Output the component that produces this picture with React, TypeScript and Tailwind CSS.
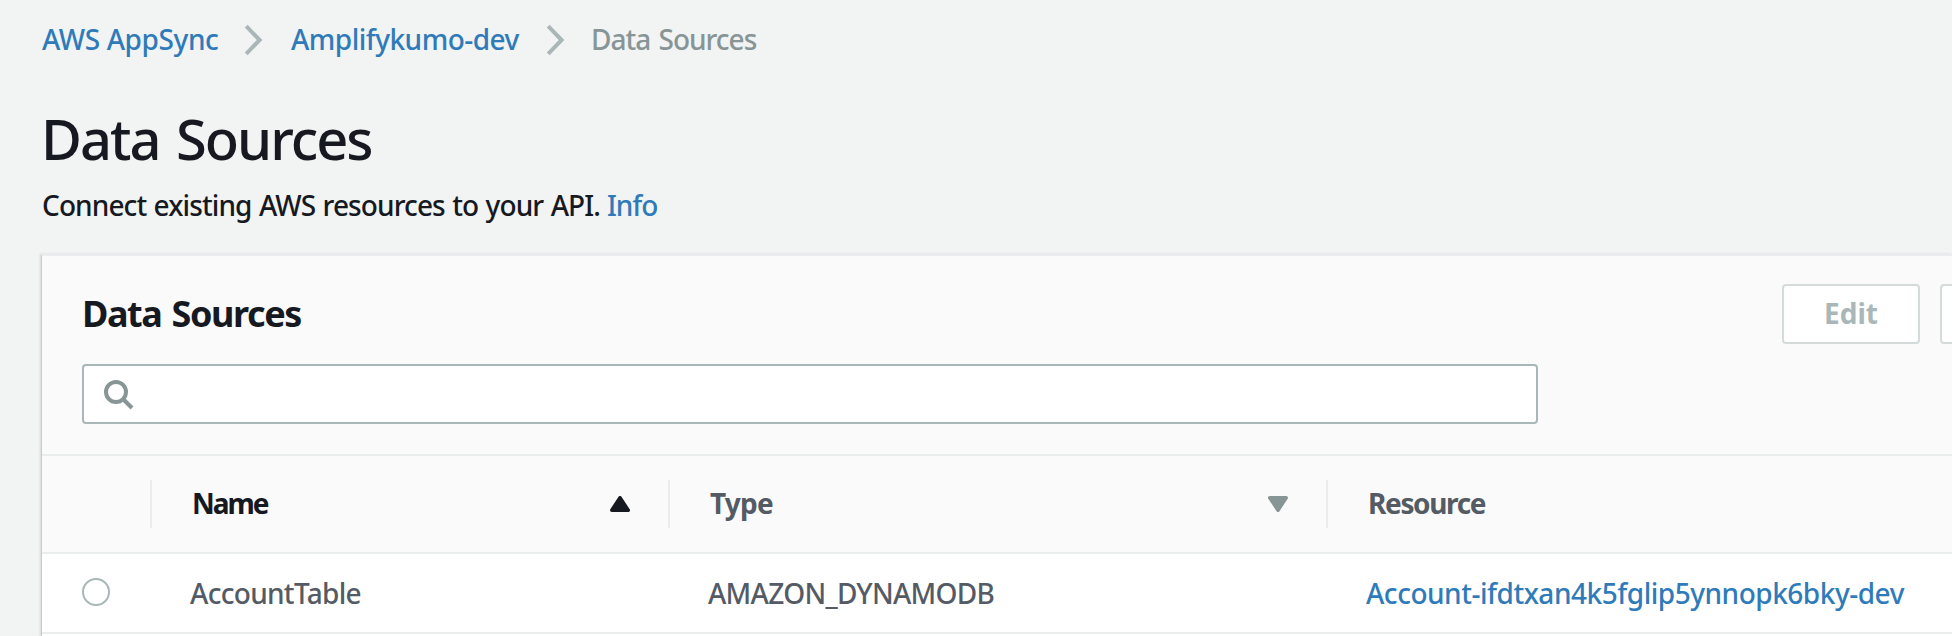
const Chevron = () => (
  <svg width="20" height="32" viewBox="0 0 20 32" fill="none" stroke="#aab7b8" strokeWidth="4" className="mt-[2px] shrink-0">
    <path d="M2.2 2.2 15.6 16 2.2 29.8" />
  </svg>
);

const SortIcon = ({ up = false }: { up?: boolean }) => (
  <svg width="20" height="16" viewBox="0 0 20 16" className={up ? "text-[#16191f]" : "rotate-180 text-[#879596]"}>
    <path d="M10 1.8 18.2 14.2H1.8Z" fill="currentColor" stroke="currentColor" strokeWidth="3.6" strokeLinejoin="round" />
  </svg>
);

const Divider = () => <span className="h-12 w-[2px] shrink-0 bg-[#eaeded]" />;

export default function App() {
  return (
    <div className="flex h-[636px] w-[1952px] flex-col overflow-hidden bg-[#f2f3f3] pl-[41px] font-['Noto_Sans',sans-serif] text-[28px] font-medium text-[#16191f]">
      <nav className="mt-[19px] flex h-10 items-center pl-px leading-10 whitespace-nowrap">
        <a className="w-[202px] shrink-0 tracking-[-0.4px] text-[#2f7bba]">AWS AppSync</a>
        <Chevron />
        <a className="ml-[27px] w-[255px] shrink-0 tracking-[-0.52px] text-[#2f7bba]">Amplifykumo-dev</a>
        <Chevron />
        <span className="ml-[25px] tracking-[-1px] [word-spacing:2px] text-[#879596]">Data Sources</span>
      </nav>
      <h1 className="mt-[43px] text-[56px] leading-[72px] tracking-[-2px] [word-spacing:4px]">Data Sources</h1>
      <p className="mt-[13px] flex h-9 pl-px leading-9 whitespace-nowrap">
        <span className="w-[565px] shrink-0 tracking-[-0.9px] [word-spacing:1px]">Connect existing AWS resources to your API.</span>
        <a className="tracking-[-1.1px] text-[#2f7bba]">Info</a>
      </p>
      <section className="mt-[31px] flex w-[1911px] flex-1 flex-col border-t-2 border-l border-t-[#eaeded] border-l-[#c9cccc] bg-white shadow-[-1px_0_2px_rgba(0,28,36,0.12)]">
        <header className="h-[200px] border-b-2 border-[#eaeded] bg-[#fafafa] pt-7 pl-10">
          <div className="flex h-[60px] items-center">
            <h2 className="w-[1700px] shrink-0 text-[36px] leading-[60px] font-bold tracking-[-1.4px] [word-spacing:2px]">Data Sources</h2>
            <button className="h-[60px] w-[138px] shrink-0 rounded-[4px] border-2 border-[#d5dbdb] bg-white pb-[2px] font-bold text-[#aab7b8]">Edit</button>
            <button className="ml-5 h-[60px] w-40 shrink-0 rounded-[4px] border-2 border-[#d5dbdb] bg-white" />
          </div>
          <div className="mt-5 flex h-[60px] w-[1456px] items-center rounded-[4px] border-2 border-[#aab7b8] bg-white pt-[2px] pl-5">
            <svg width="30" height="30" viewBox="0 0 30 30" fill="none" stroke="#879596" strokeWidth="4">
              <circle cx="12" cy="12" r="10" />
              <path d="m19 19 9 9" />
            </svg>
          </div>
        </header>
        <div className="flex h-[98px] shrink-0 items-center border-b-2 border-[#eaeded] bg-[#fafafa] pl-[108px] font-bold text-[#545b64]">
          <Divider />
          <span className="mb-[2px] ml-10 w-[418px] tracking-[-2px] text-[#16191f]">Name</span>
          <SortIcon up />
          <span className="w-[38px]" />
          <Divider />
          <span className="mb-[2px] ml-10 w-[558px] tracking-[-0.8px]">Type</span>
          <SortIcon />
          <span className="w-[38px]" />
          <Divider />
          <span className="mb-[2px] ml-10 tracking-[-1.35px]">Resource</span>
        </div>
        <div className="flex h-20 shrink-0 items-center border-b-2 border-[#eaeded] pl-10 whitespace-nowrap text-[#545b64]">
          <span className="mb-[2px] size-7 shrink-0 rounded-full border-2 border-[#aab7b8] bg-white" />
          <span className="ml-20 w-[518px] shrink-0 tracking-[-0.7px]">AccountTable</span>
          <span className="w-[658px] shrink-0 tracking-[-0.73px]">AMAZON_DYNAMODB</span>
          <a className="tracking-[-0.48px] text-[#2f7bba]">Account-ifdtxan4k5fglip5ynnopk6bky-dev</a>
        </div>
      </section>
    </div>
  );
}
